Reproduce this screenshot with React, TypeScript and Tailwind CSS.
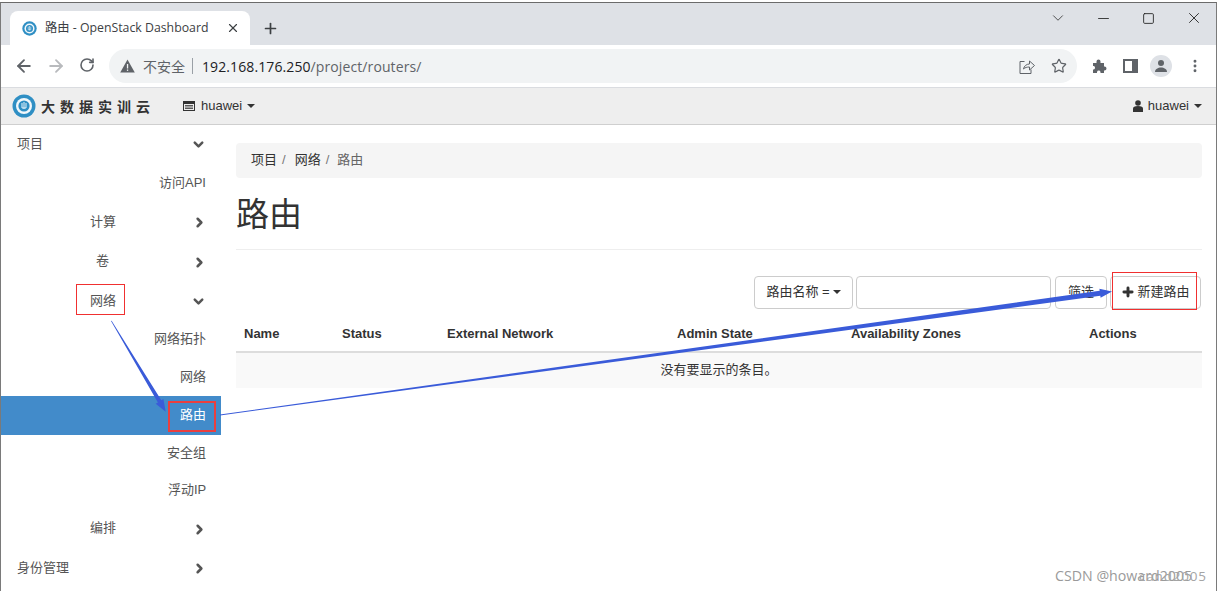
import React from "react";
import { ArrowLeft, ArrowRight, RotateCw, Star, ChevronDown, ChevronRight, X, Plus, Minus, Square, EllipsisVertical } from "lucide-react";

const cjk = '"Liberation Sans","Noto Sans CJK SC",sans-serif';

function Logo({ size }: { size: number }) {
  return (
    <svg width={size} height={size} viewBox="0 0 24 24">
      <circle cx="12" cy="12" r="11.5" fill="#2f8fc4" />
      <circle cx="12" cy="12" r="8" fill="#f2f8fb" />
      <circle cx="12" cy="12" r="5.6" fill="#2f8fc4" />
      <path d="M10 9v5h4V9M12 8v7" stroke="#e8f4fa" strokeWidth="1" fill="none" />
    </svg>
  );
}

function Caret({ className = "" }: { className?: string }) {
  return <span className={"inline-block w-0 h-0 border-x-[4px] border-x-transparent border-t-[4px] border-t-[#333] " + className} />;
}

type Row = { label: string; h: string; pad: string; chev?: "d" | "r"; active?: boolean };

const rows: Row[] = [
  { label: "项目", h: "h-[39px]", pad: "pl-[16px]", chev: "d" },
  { label: "访问API", h: "h-[39px]", pad: "pl-[158px]" },
  { label: "计算", h: "h-[39px]", pad: "pl-[89px]", chev: "r" },
  { label: "卷", h: "h-[40px]", pad: "pl-[95px]", chev: "r" },
  { label: "网络", h: "h-[39px]", pad: "pl-[89px]", chev: "d" },
  { label: "网络拓扑", h: "h-[38px]", pad: "pl-[153px]" },
  { label: "网络", h: "h-[38px]", pad: "pl-[179px]" },
  { label: "路由", h: "h-[39px]", pad: "pl-[179px]", active: true },
  { label: "安全组", h: "h-[36px]", pad: "pl-[166px]" },
  { label: "浮动IP", h: "h-[37px]", pad: "pl-[167px]" },
  { label: "编排", h: "h-[40px]", pad: "pl-[89px]", chev: "r" },
  { label: "身份管理", h: "h-[39px]", pad: "pl-[16px]", chev: "r" },
];

function SideRow({ r }: { r: Row }) {
  return (
    <div className={`relative flex items-center text-[13px] ${r.h} ${r.pad} ${r.active ? "bg-[#428bca] text-white" : "text-[#555]"}`}>
      <span className={r.active ? "mb-[2px]" : ""}>{r.label}</span>
      {r.chev === "d" && <ChevronDown size={15} strokeWidth={4} className="absolute left-[190px] mt-[2px] text-[#555]" />}
      {r.chev === "r" && <ChevronRight size={15} strokeWidth={4} className="absolute left-[191px] mt-[2px] text-[#555]" />}
    </div>
  );
}

const cols = [
  { t: "Name", w: "w-[98px]" },
  { t: "Status", w: "w-[105px]" },
  { t: "External Network", w: "w-[230px]" },
  { t: "Admin State", w: "w-[174px]" },
  { t: "Availability Zones", w: "w-[238px]" },
  { t: "Actions", w: "flex-1" },
];

export default function App() {
  return (
    <div className="relative w-[1220px] h-[591px] overflow-hidden bg-white" style={{ fontFamily: cjk }}>
      <div className="h-[591px] w-[1217px] pt-[2px]">
        <div className="h-full flex flex-col border-t border-t-[#6b6b6b] border-x border-x-[#7a7a7a] overflow-hidden">
          {/* tab strip */}
          <div className="h-[42px] shrink-0 bg-[#dee1e6] flex items-end pl-[9px]">
            <div className="h-[34px] w-[240px] bg-white rounded-t-[8px] flex items-center pl-[12px] pr-[10px] text-[#3c4043] text-[12.3px]" style={{ fontFamily: '"Open Sans","Noto Sans CJK SC",sans-serif' }}>
              <Logo size={15} />
              <span className="ml-[8px] flex-1 whitespace-nowrap">路由 - OpenStack Dashboard</span>
              <X size={14} strokeWidth={2} className="text-[#3c4043]" />
            </div>
            <Plus size={17} strokeWidth={2.4} className="text-[#3c4043] ml-[12px] mb-[8px]" />
            <div className="flex-1" />
            <div className="self-start pt-[6px] flex items-center text-[#222]">
              <ChevronDown size={18} strokeWidth={1} className="mr-[28px]" />
              <Minus size={17} strokeWidth={1.2} className="mr-[30px]" />
              <Square size={13} strokeWidth={1.6} className="mr-[30px]" />
              <X size={18} strokeWidth={1.2} className="mr-[13px]" />
            </div>
          </div>
          {/* toolbar */}
          <div className="h-[43px] shrink-0 bg-white flex items-center border-b border-b-[#dadce0] pl-[13px]">
            <ArrowLeft size={20} strokeWidth={2.2} className="text-[#5f6368]" />
            <ArrowRight size={20} strokeWidth={2.2} className="text-[#b8babd] ml-[12px]" />
            <RotateCw size={16} strokeWidth={2.4} className="text-[#5f6368] ml-[13px] mb-[2px]" />
            <div className="ml-[14px] w-[968px] h-[34px] rounded-full bg-[#f1f3f4] flex items-center pl-[11px] pr-[10px]" style={{ fontFamily: '"Open Sans","Noto Sans CJK SC",sans-serif' }}>
              <svg width="15" height="14" viewBox="0 0 15 14"><path d="M7.5 0.5 L14.8 13.5 H0.2 Z" fill="#5f6368" /><rect x="6.9" y="5" width="1.3" height="4.5" fill="#f1f3f4" /><rect x="6.9" y="10.5" width="1.3" height="1.4" fill="#f1f3f4" /></svg>
              <span className="ml-[8px] text-[14px] text-[#5f6368]">不安全</span>
              <span className="ml-[7px] w-px h-[16px] bg-[#9aa0a6]" />
              <span className="ml-[9px] text-[14px] tracking-[0.1px]"><span className="text-[#202124]">192.168.176.250</span><span className="text-[#5f6368]">/project/routers/</span></span>
              <div className="flex-1" />
              <svg width="16" height="15" viewBox="0 0 16 15" fill="none" stroke="#5f6368" strokeWidth="1"><path d="M5.5 2.5H1v12h11v-4" /><path d="M4.5 10c.5-3 3-5 6-5V2l5 4.500-5 4.500V8c-2.500 0-4.500.5-6 2z" /></svg>
              <Star size={16} strokeWidth={1.8} className="text-[#5f6368] ml-[16px]" />
            </div>
            <svg className="ml-[15px]" width="16" height="16" viewBox="0 0 16 16"><path d="M1 5h3.500V3.500a2 2 0 0 1 4 0V5H12v3.500h0.500a2 2 0 0 1 0 4H12V15H8.500v-1a1.800 1.800 0 0 0-3.500 0v1H1v-3.500h1a2 2 0 0 0 0-3.500H1z" fill="#5f6368" /></svg>
            <svg className="ml-[15px]" width="15" height="14" viewBox="0 0 15 14"><path d="M0 0h15v14H0z M2 2v10h7V2z" fill="#5f6368" fillRule="evenodd" /></svg>
            <div className="ml-[12px] w-[22px] h-[22px] rounded-full bg-[#dee1e6] flex items-center justify-center">
              <svg width="14" height="14" viewBox="0 0 14 14" fill="#5f6368"><circle cx="7" cy="4" r="3" /><path d="M1 13c0-3 3-4.500 6-4.500s6 1.500 6 4.500z" /></svg>
            </div>
            <EllipsisVertical size={16} strokeWidth={2.4} className="text-[#5f6368] ml-[15px]" />
          </div>
          {/* openstack navbar */}
          <div className="h-[37px] shrink-0 bg-[#eeeeee] border-b border-b-[#cfcfcf] flex items-center pl-[11px] text-[13px] text-[#333]">
            <Logo size={24} />
            <span className="ml-[5px] w-[112px] text-[14px] font-bold tracking-[5px] whitespace-nowrap text-[#333]" style={{ fontFamily: '"Noto Sans CJK SC",sans-serif' }}>大数据实训云</span>
            <svg className="ml-[30px]" width="12" height="10" viewBox="0 0 12 10"><path d="M0 0h12v10H0z M1 3v6h10V3z" fill="#333" fillRule="evenodd" /><path d="M2 4.500h8M2 6h8M2 7.500h8" stroke="#333" strokeWidth="0.8" /></svg>
            <span className="ml-[6px]">huawei</span>
            <Caret className="ml-[5px]" />
            <div className="flex-1" />
            <svg width="10" height="12" viewBox="0 0 10 12" fill="#333"><circle cx="5" cy="3" r="2.800" /><path d="M0 12V8.500C0 7 1.500 6 5 6s5 1 5 2.500V12z" /></svg>
            <span className="ml-[5px]">huawei</span>
            <Caret className="ml-[5px] mr-[14px]" />
          </div>
          {/* body */}
          <div className="flex-1 flex min-h-0">
            <div className="w-[220px] shrink-0 -mt-[1px]">
              {rows.map((r, i) => <SideRow key={i} r={r} />)}
            </div>
            <div className="w-[966px] ml-[15px] pt-[18px] text-[13px] text-[#333]">
              <div className="h-[35px] bg-[#f5f5f5] rounded-[4px] flex items-center pl-[15px] pb-[2px]">
                <span>项目</span>
                <span className="text-[#777] ml-[5px] mr-[9px]">/</span>
                <span>网络</span>
                <span className="text-[#777] ml-[5px] mr-[8px]">/</span>
                <span className="text-[#666]">路由</span>
              </div>
              <div className="h-[72px] border-b border-b-[#eeeeee] flex items-center">
                <h1 className="text-[33px] leading-none text-[#333] mt-[2px]">路由</h1>
              </div>
              <div className="mt-[26px] h-[33px] flex justify-end">
                <div className="w-[99px] border border-[#ccc] rounded-[4px] flex items-center justify-center pb-[2px]">
                  <span>路由名称 =</span><Caret className="ml-[3px]" />
                </div>
                <div className="w-[195px] ml-[3px] border border-[#ccc] rounded-[4px]" />
                <div className="w-[52px] ml-[4px] border border-[#ccc] rounded-[4px] flex items-center justify-center pb-[2px]">筛选</div>
                <div className="w-[91px] ml-[3px] mr-[1px] border border-[#ccc] rounded-[4px] flex items-center justify-center pb-[2px]">
                  <Plus size={14} strokeWidth={5} className="mr-[2px]" />新建路由
                </div>
              </div>
              <div className="mt-[7px] h-[37px] flex items-center border-b-2 border-b-[#dddddd] font-bold text-[#333]">
                {cols.map((c) => <div key={c.t} className={`pl-[8px] ${c.w}`}>{c.t}</div>)}
              </div>
              <div className="h-[35px] bg-[#f9f9f9] flex items-center justify-center pb-[2px]">没有要显示的条目。</div>
            </div>
          </div>
        </div>
      </div>

      {/* annotations pasted over the screenshot */}
      <div className="absolute left-[76px] top-[284px] w-[49px] h-[31px] border border-[#f03030]" />
      <div className="absolute left-[168px] top-[401px] w-[48px] h-[31px] border-2 border-[#ea3f3f]" />
      <div className="absolute left-[1112px] top-[272px] w-[85px] h-[38px] border border-[#f03030]" />
      <svg className="absolute left-0 top-0 pointer-events-none" width="1220" height="591" viewBox="0 0 1220 591">
        <polygon points="111,321 111.600,320.700 161.300,400.200 163.400,399.100 165.700,411.700 155.700,403.700 157.900,402.400" fill="#3a5bd9" />
        <polygon points="220,415.500 220,414.500 1099.700,290.700 1099.400,288.700 1112,291.500 1100.600,297.700 1100.300,295.700" fill="#3a5bd9" />
      </svg>
      <div className="absolute left-[1055px] top-[567px] text-[14.200px] leading-[17px] text-[#9a9a9a] whitespace-nowrap" style={{ fontFamily: '"Open Sans",sans-serif' }}>CSDN @howard2005</div>
      <div className="absolute left-[1139px] top-[568px] text-[13.500px] tracking-[0.8px] leading-[16px] text-[#a5a5a5] whitespace-nowrap" style={{ fontFamily: '"Open Sans",sans-serif' }}>cand2005</div>
    </div>
  );
}
